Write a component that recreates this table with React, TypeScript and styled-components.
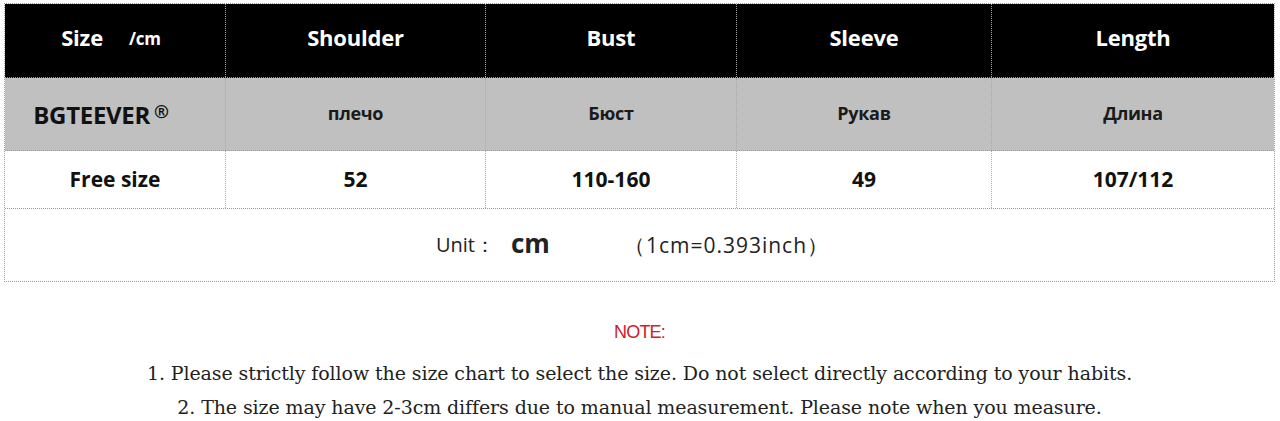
import React from "react";
import styled, { createGlobalStyle } from "styled-components";

const GlobalStyle = createGlobalStyle`
  html, body {
    margin: 0;
    padding: 0;
    background: #ffffff;
  }
  body {
    font-family: "Open Sans", Lato, sans-serif;
  }
`;

const columns = "220px 260px 251px 255px 1fr";

const headers = ["Shoulder", "Bust", "Sleeve", "Length"];
const russian = ["плечо", "Бюст", "Рукав", "Длина"];
const values = ["52", "110-160", "49", "107/112"];

const App: React.FC = () => {
  return (
    <>
      <GlobalStyle />
      <Page>
        <Chart>
          <Row $height={73} $bg="#000000">
            <HeadCell>
              Size <Small>/cm</Small>
            </HeadCell>
            {headers.map((h) => (
              <HeadCell key={h}>{h}</HeadCell>
            ))}
          </Row>
          <Row $height={72} $bg="#c0c0c0">
            <BrandCell>
              BGTEEVER <Reg>®</Reg>
            </BrandCell>
            {russian.map((r) => (
              <RuCell key={r}>{r}</RuCell>
            ))}
          </Row>
          <Row $height={57} $bg="#ffffff">
            <ValueCell>Free size</ValueCell>
            {values.map((v) => (
              <ValueCell key={v}>{v}</ValueCell>
            ))}
          </Row>
          <UnitRow>
            <UnitLabel>Unit：</UnitLabel>
            <UnitCm>cm</UnitCm>
            <UnitConv>（1cm=0.393inch）</UnitConv>
          </UnitRow>
        </Chart>

        <Notes>
          <NoteTitle>NOTE:</NoteTitle>
          <NoteLine>
            1. Please strictly follow the size chart to select the size. Do not
            select directly according to your habits.
          </NoteLine>
          <NoteLine>
            2. The size may have 2-3cm differs due to manual measurement. Please
            note when you measure.
          </NoteLine>
        </Notes>
      </Page>
    </>
  );
};

const Page = styled.div`
  width: 1280px;
  height: 421px;
  padding: 3px 5px 0 4px;
  box-sizing: border-box;
  overflow: hidden;
`;

const Chart = styled.div`
  border: 1px dotted #9a9a9a;
  display: flex;
  flex-direction: column;
`;

const Row = styled.div<{ $height: number; $bg: string }>`
  display: grid;
  grid-template-columns: ${columns};
  height: ${(p) => p.$height}px;
  background: ${(p) => p.$bg};
  border-bottom: 1px dotted #9a9a9a;

  & > div + div {
    border-left: 1px dotted #a8a8a8;
  }
`;

const Cell = styled.div`
  display: flex;
  align-items: center;
  justify-content: center;
  font-weight: 700;
`;

const HeadCell = styled(Cell)`
  color: #ffffff;
  font-size: 22px;
  letter-spacing: -0.2px;
  padding-bottom: 8px;

  &:first-child {
    padding-right: 8px;
  }
`;

const Small = styled.span`
  font-size: 17px;
  margin-left: 26px;
  margin-top: 4px;
`;

const BrandCell = styled(Cell)`
  color: #111111;
  font-size: 24px;
  letter-spacing: -0.3px;
  padding-right: 28px;
`;

const Reg = styled.span`
  font-size: 18px;
  margin-left: 4px;
  margin-top: -6px;
`;

const RuCell = styled(Cell)`
  color: #1a1a1a;
  font-size: 18px;
  letter-spacing: -0.3px;
  padding-bottom: 2px;
`;

const ValueCell = styled(Cell)`
  color: #111111;
  font-size: 21px;
  padding-bottom: 2px;
`;

const UnitRow = styled.div`
  height: 72px;
  display: flex;
  align-items: center;
  justify-content: center;
  color: #222222;
  padding-right: 14px;
`;

const UnitLabel = styled.span`
  font-size: 20px;
`;

const UnitCm = styled.span`
  font-weight: 700;
  font-size: 26px;
  margin-left: 16px;
  margin-top: -4px;
`;

const UnitConv = styled.span`
  font-size: 21px;
  margin-left: 74px;
  letter-spacing: 1px;
`;

const Notes = styled.div`
  display: flex;
  flex-direction: column;
  align-items: center;
  margin-top: 40px;
`;

const NoteTitle = styled.div`
  font-family: "Liberation Sans", Arial, sans-serif;
  color: #d0202a;
  font-size: 18px;
  letter-spacing: -0.8px;
  margin-bottom: 13px;
`;

const NoteLine = styled.div`
  font-family: "DejaVu Serif", serif;
  color: #222222;
  font-size: 19px;
  letter-spacing: -0.1px;
  line-height: 34px;
`;

export default App;
